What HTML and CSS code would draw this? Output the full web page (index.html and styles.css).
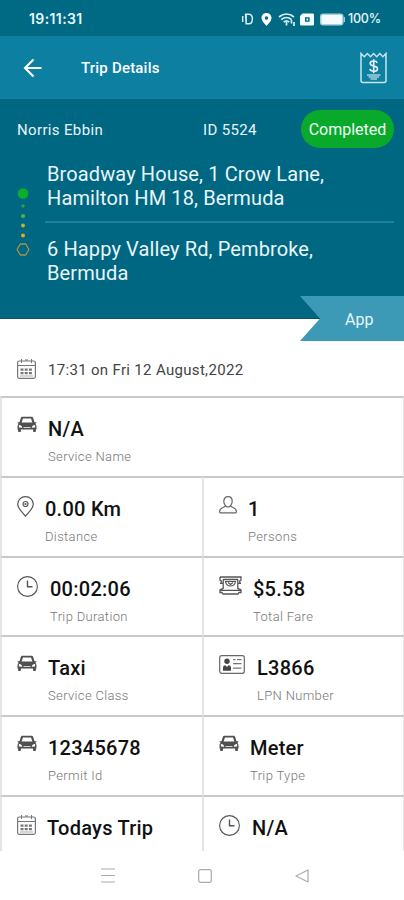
FILE: index.html
```html
<!DOCTYPE html>
<html lang="en">
<head>
<meta charset="utf-8">
<title>Trip Details</title>
<link rel="stylesheet" href="styles.css">
</head>
<body>
<svg class="defs" width="0" height="0">
  <defs>
    <symbol id="car" viewBox="0 0 20 17">
      <path fill="#505050" fill-rule="evenodd" d="M5.600 .8h8.800c.9 0 1.500.5 1.800 1.300L17.500 6.200h1.500c.6 0 .8.8.2 1.100l-.9.500c.8.7 1.200 1.500 1.200 2.500v2.600c0 .4-.2.700-.6.700v1.300c0 1.600-2.800 1.600-2.800 0V13.600H3.900v1.300c0 1.600-2.800 1.600-2.800 0V13.600c-.4 0-.6-.3-.6-.7v-2.600c0-1 .4-1.800 1.200-2.500l-.9-.5C.200 7 .4 6.200 1 6.200h1.500l1.300-4.100C4.100 1.300 4.700 .8 5.600 .8zM6 2.400L4.600 6.400h10.800L14 2.400zM1.900 8.900v2.500l3.300.4c0-1.700-1.300-2.900-3.300-2.900zM18.100 8.900c-2 0-3.300 1.200-3.300 2.900l3.300-.4zM6.500 11.200v.8h7v-.8z"/>
    </symbol>
    <symbol id="clock" viewBox="0 0 21 21">
      <g fill="none" stroke="#555"><circle cx="10.500" cy="10.500" r="9.900" stroke-width="1.100"/><path stroke-width="1.400" d="M10.500 4.500v6.200h5"/></g>
    </symbol>
    <symbol id="cal" viewBox="0 0 19 20">
      <g fill="none" stroke="#777"><rect x=".6" y="2" width="17.800" height="17.300" rx="1.800" stroke-width="1.200"/><path d="M.6 6.500h17.800M4.500 0v4M14.500 0v4M8 1h3"/><path stroke-width="2.200" stroke-dasharray="3 1.200" d="M3.500 10.700h12M3.500 14.200h12"/><path stroke="#aaa" d="M3 17h13"/></g>
    </symbol>
  </defs>
</svg>
<div class="screen">
  <div class="status">
    <span class="time">19:11:31</span>
    <svg width="104" height="16" viewBox="0 0 104 16">
      <g fill="none" stroke="#d5edf4" stroke-width="1.500"><path d="M4.600 3.200h3.200c2.400 0 3.600 1.800 3.600 4.800s-1.200 4.800-3.600 4.800H5.200zM5.200 3.200v9.600M1.700 5v6"/></g>
      <path fill="#fff" fill-rule="evenodd" d="M25.500 2c-3 0-5 2.200-5 5 0 3 3 5.500 5 8 2-2.500 5-5 5-8 0-2.800-2-5-5-5zm0 3.300a1.700 1.700 0 1 1 0 3.400 1.700 1.700 0 0 1 0-3.400z"/>
      <g fill="none" stroke="#d5edf4" stroke-width="1.700"><path d="M38 6c4.500-4 10.500-4 15 0M40.300 8.600c3-2.700 7.200-2.700 10.300 0M42.700 11.200c1.700-1.500 4-1.500 5.600 0"/><path d="M45.500 11v3.500M50.500 9v3.500M53 11v4"/></g>
      <path fill="#f4fbfd" fill-rule="evenodd" d="M61.500 2.500h10c1 0 1.500.5 1.500 1.500v9c0 1-.5 1.500-1.500 1.500H60.500c-1 0-1.500-.5-1.500-1.500V5zM64 6.300v4.400h4.600V6.300zM65.500 7.600h1.600v1.800h-1.600z"/>
      <rect x="79" y="2.500" width="23.500" height="12" rx="3" fill="#a9d2df"/><rect x="80.500" y="4" width="20.500" height="9" rx="1.500" fill="#f4fbfd"/><path d="M103.300 6v5" stroke="#a9d2df" stroke-width="1.300"/>
    </svg>
    <span class="pct">100%</span>
  </div>
  <div class="appbar">
    <svg width="19" height="20" viewBox="0 0 19 20"><path d="M10.500 1.500L2 10l8.500 8.500M2 10h16.500" fill="none" stroke="#fff" stroke-width="2.100"/></svg>
    <h1>Trip Details</h1>
    <svg class="receipt" width="27" height="32" viewBox="0 0 27 32">
      <path d="M1 1.500V28.500a2 2 0 0 0 2 2h21a2 2 0 0 0 2-2V1.500l-3.100 3.200-3.100-3.200-3.100 3.200-3.100-3.200-3.100 3.200-3.100-3.200-3.100 3.200z" fill="none" stroke="#c9e5ee" stroke-width="1.500"/>
      <path d="M17.300 10.800c-.6-1.200-1.900-1.800-3.600-1.800-2.100 0-3.500.9-3.500 2.500 0 3.700 7.300 1.500 7.300 5.200 0 1.700-1.600 2.600-3.700 2.600-2 0-3.500-.8-4-2.200M13.700 7.200v14" fill="none" stroke="#e4f4f8" stroke-width="1.600"/>
      <path d="M7 23h13.500M8.500 25h10.500M10.500 27h6.500" stroke="#a4d0de" stroke-width="1.600"/>
    </svg>
  </div>
  <div class="hero">
    <div class="who"><span class="name">Norris Ebbin</span><span class="tid">ID 5524</span><span class="badge">Completed</span></div>
    <div class="route">
      <svg width="14" height="72" viewBox="0 0 14 72">
        <circle cx="7" cy="6.500" r="5.300" fill="#0ab02c"/>
        <circle cx="7" cy="19" r="1.700" fill="#26a344"/><circle cx="7" cy="29" r="2" fill="#4fb53c"/><circle cx="7" cy="38.500" r="2" fill="#b7b83a"/><circle cx="7" cy="48.500" r="2" fill="#e4a927"/>
        <path d="M4.300 57l-3.200 5.500 3.200 5.500h5.400l3.200-5.500L9.700 57z" fill="none" stroke="#a99245" stroke-width="1.300" stroke-linejoin="round"/>
      </svg>
      <div class="stops">
        <p>Broadway House, 1 Crow Lane,<br>Hamilton HM 18, Bermuda</p>
        <hr>
        <p>6 Happy Valley Rd, Pembroke,<br>Bermuda</p>
      </div>
    </div>
    <div class="ribbon">App</div>
  </div>
  <div class="when"><svg width="19" height="20"><use href="#cal"/></svg><span>17:31 on Fri 12 August,2022</span></div>
  <div class="grid">
    <div class="cell wide"><svg width="20" height="17"><use href="#car"/></svg><div><b>N/A</b><small>Service Name</small></div></div>

    <div class="cell"><svg width="17" height="21" viewBox="0 0 17 21"><g fill="none" stroke="#555" stroke-width="1.200"><path d="M8.500 .7C4 .7.700 4 .7 8.200c0 4.500 4.800 8 7.800 12 3-4 7.800-7.500 7.800-12C16.300 4 13 .7 8.500.7z"/><circle cx="8.500" cy="8" r="2.500"/><circle cx="8.500" cy="8" r=".5"/></g></svg><div><b>0.00 Km</b><small>Distance</small></div></div>
    <div class="cell"><svg width="18" height="18" viewBox="0 0 18 18"><path d="M9 .7c-2.600 0-4.200 1.900-4.200 4.500S6.600 11 9 11s4.200-3.200 4.200-5.800S11.600.7 9 .7zM6 10.300c-.5 1.200-4.700 1-5.300 4.500-.2 1.300 0 2 .8 2h15c.8 0 1-.7.8-2-.6-3.500-4.800-3.300-5.300-4.500" fill="none" stroke="#666" stroke-width="1.200"/></svg><div><b>1</b><small>Persons</small></div></div>

    <div class="cell roomy"><svg width="21" height="21"><use href="#clock"/></svg><div><b>00:02:06</b><small>Trip Duration</small></div></div>
    <div class="cell"><svg width="23" height="19" viewBox="0 0 23 19"><g fill="none" stroke="#555" stroke-width="1.300"><path d="M1 1h21v3c-1.800.3-1.800 3 0 3.300M1 1v3c1.800.3 1.800 3 0 3.300h3M19 7.300h3M4 3.500h15M4.200 3.500v8.800L1 14v2.500h2l1 1.500h15l1-1.500h2V14l-3.200-1.700V3.500M1.500 14.300h20"/><path d="M6.500 5.500c1 6 9 6 10 0zM9 6.500l2.500 2 2.500-2" stroke-width="1.200"/></g></svg><div><b>$5.58</b><small>Total Fare</small></div></div>

    <div class="cell"><svg width="20" height="17"><use href="#car"/></svg><div><b>Taxi</b><small>Service Class</small></div></div>
    <div class="cell roomy"><svg width="26" height="19" viewBox="0 0 26 19"><rect x=".7" y=".7" width="24.600" height="17.600" rx="2" fill="none" stroke="#666" stroke-width="1.200"/><circle cx="8" cy="6.300" r="2.700" fill="#444"/><path d="M4 15.700v-3c0-1.700 1-2.500 2.500-2.500L8 12l1.500-1.800c1.500 0 2.500.8 2.500 2.500v3z" fill="#444"/><path d="M14 4.700h2.500M18 4.700h4.500M14 8.600h8.500M14 13.200h8.500" stroke="#777" stroke-width="1.200"/></svg><div><b>L3866</b><small>LPN Number</small></div></div>

    <div class="cell"><svg width="20" height="17"><use href="#car"/></svg><div><b>12345678</b><small>Permit Id</small></div></div>
    <div class="cell"><svg width="20" height="17"><use href="#car"/></svg><div><b>Meter</b><small>Trip Type</small></div></div>

    <div class="cell"><svg width="19" height="20"><use href="#cal"/></svg><div><b>Todays Trip</b></div></div>
    <div class="cell roomy"><svg width="21" height="21"><use href="#clock"/></svg><div><b>N/A</b></div></div>
  </div>
  <div class="nav">
    <svg width="14" height="15" viewBox="0 0 14 15"><path d="M0 1h14M0 7.500h14M0 14h14" stroke="#aaa" stroke-width="1.200"/></svg>
    <svg width="14" height="14" viewBox="0 0 14 14"><rect x=".7" y=".7" width="12.600" height="12.600" rx="2" fill="none" stroke="#aaa" stroke-width="1.200"/></svg>
    <svg width="14" height="14" viewBox="0 0 14 14"><path d="M13 1v12L1 7z" fill="none" stroke="#aaa" stroke-width="1.200" stroke-linejoin="round"/></svg>
  </div>
</div>
</body>
</html>
```
FILE: styles.css
```css
* { box-sizing: border-box; }
body { margin: 0; background: #fff; font-family: Roboto, "Liberation Sans", sans-serif; }
svg { display: block; flex: none; }
.defs { position: absolute; }
.screen { width: 404px; height: 900px; overflow: hidden; display: flex; flex-direction: column; }
.screen > div { flex: none; }

.status { height: 36px; background: #006984; color: #e9f6fa; display: flex; align-items: center; padding: 1px 22px 0 29px; }
.time { font: 600 14px/18px Inter, sans-serif; flex: 1; letter-spacing: .4px; }
.pct { font: 500 12.500px/18px Inter, sans-serif; width: 34px; margin-left: 3px; letter-spacing: -.2px; }

.appbar { height: 63px; background: #0d7fa1; color: #fff; display: flex; align-items: center; padding: 1px 17px 0 23px; }
h1 { font-size: 15px; font-weight: 500; margin: 0 0 0 39px; flex: 1; letter-spacing: .2px; }

.hero { position: relative; height: 220px; background: #006782; color: #e9f5f8; padding-top: 11px; border-bottom: 1px solid #00546d; }
.who { display: flex; align-items: center; height: 38px; padding: 0 10px 0 17px; font-size: 15px; line-height: 20px; }
.name { width: 186px; letter-spacing: .35px; padding-top: 2px; }
.tid { flex: 1; letter-spacing: .35px; padding-top: 2px; }
.badge { width: 93px; height: 38px; border-radius: 19px; background: #09aa2b; color: #f2fff4; text-align: center; line-height: 40px; font-size: 16px; }
.route { display: flex; padding: 14px 10px 0 16px; gap: 17px; }
.route > svg { margin-top: 25px; }
.stops { flex: 1; }
.stops p { margin: 0; font-size: 20px; line-height: 24px; white-space: nowrap; letter-spacing: .12px; }
.stops hr { margin: 11px 0 14px -2px; border: 0; height: 2px; background: #20809b; }
.ribbon { position: absolute; right: 0; top: 197px; width: 104px; height: 45px; background: #3d9ab7; clip-path: polygon(0 0, 100% 0, 100% 100%, 0 100%, 20px 50%); font-size: 16px; line-height: 48px; padding-left: 45px; }

.when { height: 77px; display: flex; align-items: center; gap: 12px; padding: 23px 0 0 17px; font-size: 15px; color: #444; letter-spacing: .32px; }
.when span { padding-top: 2px; }
.grid { height: 455px; overflow: hidden; display: grid; grid-template-columns: 202px 202px; grid-auto-rows: 79.800px; }
.cell { display: flex; gap: 11px; align-items: flex-start; padding: 19px 0 0 15px; border-top: 2px solid #c9c9c9; border-left: 2px solid #e5e5e5; }
.roomy { gap: 12px; }
.cell:nth-child(odd), .wide { border-right: 1px solid #e5e5e5; }
.wide { grid-column: span 2; }
.cell b { display: block; font-size: 20px; line-height: 24px; font-weight: 500; color: #111; letter-spacing: .25px; }
.cell > svg { margin-top: -1px; }
.cell small { display: block; font-size: 13px; line-height: 16px; margin-top: 8px; font-weight: 300; color: #777; letter-spacing: .35px; }
.nav { height: 49px; display: flex; justify-content: space-between; align-items: center; padding: 0 95px 0 101px; }
```
